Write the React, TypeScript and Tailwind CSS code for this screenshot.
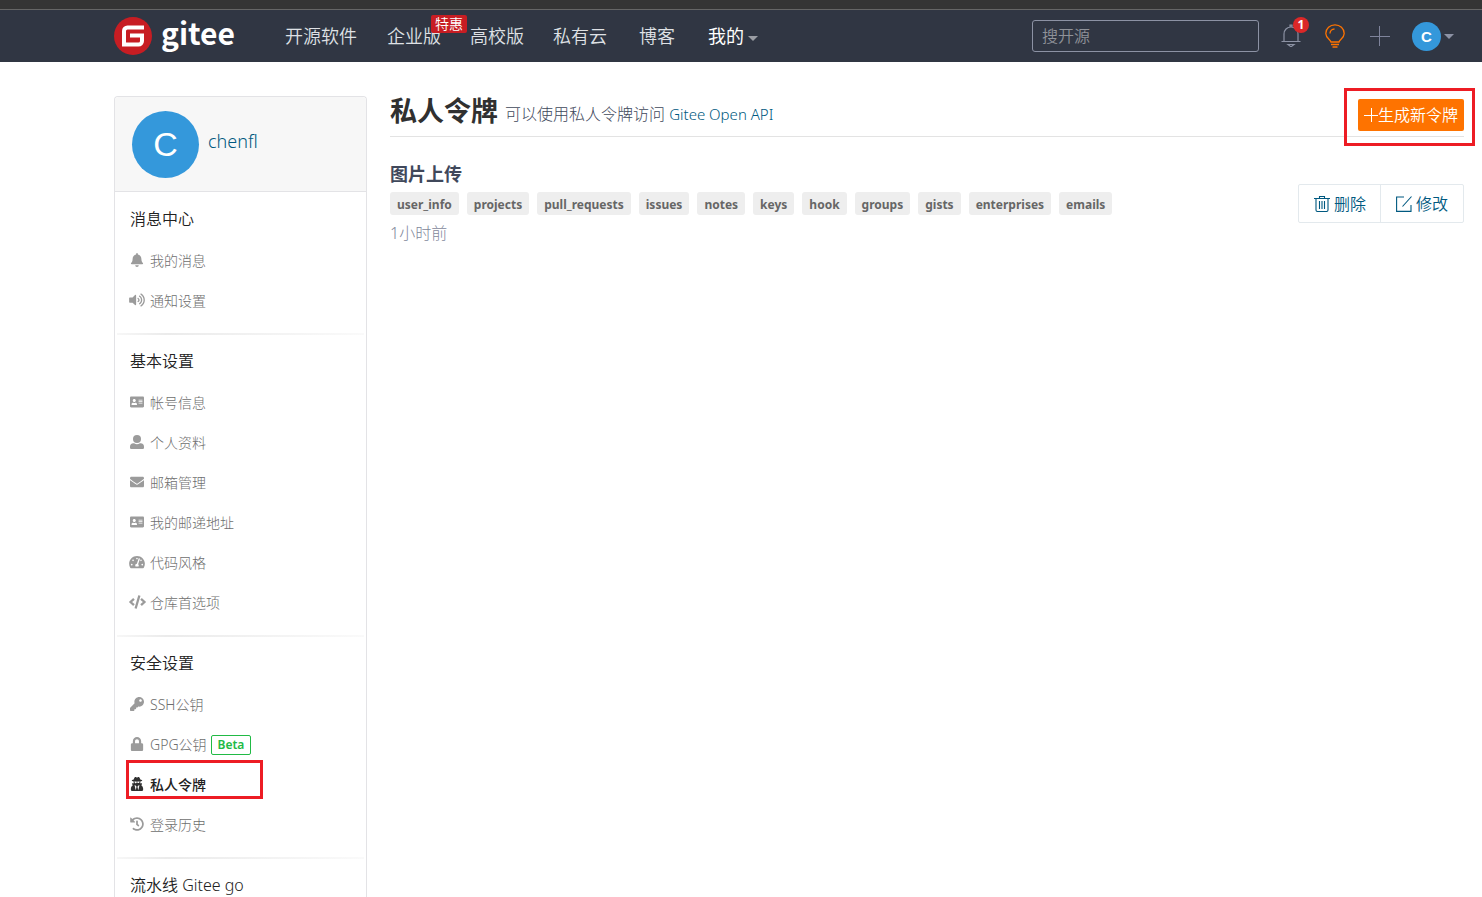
import type { ReactNode } from 'react';
import {
  FaAddressCard,
  FaBell,
  FaCode,
  FaEnvelope,
  FaHistory,
  FaKey,
  FaLock,
  FaTachometerAlt,
  FaUserSecret,
  FaVolumeUp,
} from 'react-icons/fa';

interface MenuItem {
  label: string;
  icon: ReactNode;
  beta?: boolean;
  active?: boolean;
}

interface MenuSection {
  title: string;
  items: MenuItem[];
}

function UserIcon() {
  return (
    <svg viewBox="0 0 14 14" className="size-3.5" fill="currentColor" aria-hidden="true">
      <circle cx="7" cy="4" r="4" />
      <path d="M3.500 8.300h.6a5 5 0 0 0 5.800 0h.6A3.500 3.500 0 0 1 14 11.800v1A1.200 1.200 0 0 1 12.800 14H1.200A1.200 1.200 0 0 1 0 12.800v-1a3.500 3.500 0 0 1 3.500-3.500z" />
    </svg>
  );
}

const sections: MenuSection[] = [
  {
    title: '消息中心',
    items: [
      { label: '我的消息', icon: <FaBell className="h-3.5" /> },
      { label: '通知设置', icon: <FaVolumeUp className="h-3.5 w-4 shrink-0" /> },
    ],
  },
  {
    title: '基本设置',
    items: [
      { label: '帐号信息', icon: <FaAddressCard className="h-3.5" /> },
      { label: '个人资料', icon: <UserIcon /> },
      { label: '邮箱管理', icon: <FaEnvelope className="h-3.5" /> },
      { label: '我的邮递地址', icon: <FaAddressCard className="h-3.5" /> },
      { label: '代码风格', icon: <FaTachometerAlt className="h-3.5 w-4 shrink-0" /> },
      { label: '仓库首选项', icon: <FaCode className="h-3.5 w-[17px] shrink-0" /> },
    ],
  },
  {
    title: '安全设置',
    items: [
      { label: 'SSH公钥', icon: <FaKey className="h-3.5" /> },
      { label: 'GPG公钥', icon: <FaLock className="h-3.5" />, beta: true },
      { label: '私人令牌', icon: <FaUserSecret className="h-3.5" />, active: true },
      { label: '登录历史', icon: <FaHistory className="h-3.5" /> },
    ],
  },
  { title: '流水线 Gitee go', items: [] },
];

const scopes = [
  'user_info',
  'projects',
  'pull_requests',
  'issues',
  'notes',
  'keys',
  'hook',
  'groups',
  'gists',
  'enterprises',
  'emails',
];

function Logo() {
  return (
    <a href="#" className="flex items-center gap-[9px] text-white">
      <svg viewBox="0 0 38 38" className="size-[38px]" aria-hidden="true">
        <circle cx="19" cy="19" r="19" fill="#c71d23" />
        <path
          d="M30 10.500H13.500a3.500 3.500 0 0 0-3.500 3.500V27.500h14.500a3.500 3.500 0 0 0 3.500-3.500V18.500H16"
          fill="none"
          stroke="#fff"
          strokeWidth="4"
        />
      </svg>
      <span className="mb-2 font-['Noto_Sans_CJK_SC',sans-serif] text-[30px] leading-[30px] font-bold">gitee</span>
    </a>
  );
}

function Caret({ className }: { className: string }) {
  return (
    <svg viewBox="0 0 10 5" className={`h-[5px] w-[10px] ${className}`} aria-hidden="true">
      <path d="M0 0h10L5 5z" fill="currentColor" />
    </svg>
  );
}

function NavLink({ children, className = '' }: { children: ReactNode; className?: string }) {
  return (
    <a href="#" className={`relative flex items-center whitespace-nowrap ${className}`}>
      {children}
    </a>
  );
}

function Header() {
  return (
    <header className="flex h-[52px] shrink-0 items-center bg-[#303643] pr-7 pl-[114px]">
      <Logo />
      <nav className="ml-[50px] flex text-lg leading-none font-[350] text-[#dfe1e5]">
        <NavLink className="mr-[30px]">开源软件</NavLink>
        <NavLink className="mr-[29px]">
          企业版
          <span className="absolute -top-3 left-11 z-10 flex h-[18px] items-center rounded-xs bg-[#c71d23] px-1 text-sm leading-none text-white">
            特惠
          </span>
        </NavLink>
        <NavLink className="mr-[29px]">高校版</NavLink>
        <NavLink className="mr-8">私有云</NavLink>
        <NavLink className="mr-[33px]">博客</NavLink>
        <NavLink className="gap-1 font-normal text-white">
          我的
          <Caret className="mt-1 text-[#9a9da4]" />
        </NavLink>
      </nav>
      <div className="ml-auto flex items-center">
        <input
          type="text"
          aria-label="搜开源"
          placeholder="搜开源"
          className="h-8 w-[227px] rounded-[3px] border border-[#8c92a4] bg-transparent px-[9px] text-base font-[350] text-white placeholder:text-[#8f9299]"
        />
        <button type="button" aria-label="通知" className="relative ml-[22px] text-[#8c92a4]">
          <svg viewBox="0 0 20 24" className="h-6 w-5" fill="none" stroke="currentColor" strokeWidth="1.2">
            <path d="M.5 17.500h19M3 17.500V10c0-4 3-7 7-7s7 3 7 7v7.500M9 3V1.200h2V3M7 20.500h6L10.500 22.500h-1z" />
          </svg>
          <span className="absolute -top-[7px] left-3 flex size-4 items-center justify-center rounded-full bg-[#db2828] text-xs leading-none font-bold text-white">
            1
          </span>
        </button>
        <button type="button" aria-label="提示" className="ml-6 text-[#fe7300]">
          <svg viewBox="0 0 20 24" className="h-6 w-5" fill="none" stroke="currentColor" strokeWidth="1.3">
            <path d="M6 18C5.500 15.500.8 14 .8 9.500.8 4.500 5 .8 10 .8s9.200 3.700 9.200 8.700c0 4.500-4.700 6-5.200 8.500zM6 20.500h8M7.500 23h5M5 9.500c0-2.500 2-4.500 4.500-4.500" />
          </svg>
        </button>
        <button type="button" aria-label="新建" className="ml-[25px] text-[#7f849c]">
          <svg viewBox="0 0 20 20" className="size-5" fill="none" stroke="currentColor" strokeWidth="1">
            <path d="M0 10.500h20M9.500 0v20" />
          </svg>
        </button>
        <button type="button" aria-label="chenfl" className="ml-[22px] flex items-center gap-[3px]">
          <span className="flex size-[29px] items-center justify-center rounded-full bg-[#3498db] font-['Liberation_Sans',sans-serif] text-[15px] leading-none font-bold text-white">
            C
          </span>
          <Caret className="w-[9px] text-[#8c92a4]" />
        </button>
      </div>
    </header>
  );
}

function MenuRow({ item }: { item: MenuItem }) {
  return (
    <li className="relative flex h-10 items-center">
      {item.active && (
        <span className="pointer-events-none absolute -top-[5px] -left-1 h-[39px] w-[137px] border-3 border-[#ed1c24]" />
      )}
      <a
        href="#"
        className={`flex items-center gap-1 text-sm leading-none ${item.active ? 'font-medium text-[#212121]' : 'font-light text-[#6e6e6e]'}`}
      >
        <span className={`mb-0.5 -ml-0.5 flex w-[18px] justify-center ${item.active ? 'text-[#303030]' : 'text-[#9b9b9b]'}`}>
          {item.icon}
        </span>
        {item.label}
        {item.beta && (
          <span className="flex h-5 items-center rounded-xs border border-[#21ba45] px-1.5 text-xs leading-none font-semibold text-[#21ba45]">
            Beta
          </span>
        )}
      </a>
    </li>
  );
}

function Sidebar() {
  return (
    <aside className="w-[253px] shrink-0 rounded-t border border-b-0 border-[#e3e3e6]">
      <div className="flex h-[95px] items-center gap-[9px] rounded-t border-b border-[#e3e3e6] bg-[#f7f7f7] pl-[17px]">
        <span className="flex size-[67px] items-center justify-center rounded-full bg-[#3498db] font-['Liberation_Sans',sans-serif] text-[34px] leading-none text-white">
          C
        </span>
        <a href="#" className="mb-1.5 text-lg leading-none font-[350] text-[#005980]">
          chenfl
        </a>
      </div>
      <div className="pt-px">
        {sections.map((section, index) => (
          <section key={section.title}>
            {index > 0 && (
              <div className="mx-0.5 h-0.5 bg-linear-to-r from-[#f7f7f7] via-[#ebebeb] via-20% to-[#fafafa]" />
            )}
            <div className="px-[15px] py-3">
              <h3 className="mb-2 flex h-7 items-center text-base leading-none font-[350] text-[#212121]">
                {section.title}
              </h3>
              <ul>
                {section.items.map((item) => (
                  <MenuRow key={item.label} item={item} />
                ))}
              </ul>
            </div>
          </section>
        ))}
      </div>
    </aside>
  );
}

function TokenActions() {
  return (
    <div className="flex h-[39px] shrink-0 rounded-xs border border-[#e3e9ed] text-base leading-none font-[350] text-[#005980]">
      <button type="button" className="flex items-center gap-1 border-r border-[#e3e9ed] pr-3.5 pl-[15px]">
        <svg viewBox="0 0 16 16" className="size-4" fill="none" stroke="currentColor" strokeWidth="1.1">
          <path d="M0 2.500h16M5.500 2.500v-2h5v2M2 2.500v11.500q0 1.500 1.500 1.500h9q1.500 0 1.500-1.500V2.500M5.500 5v8M8 5v8M10.500 5v8" />
        </svg>
        删除
      </button>
      <button type="button" className="flex items-center gap-1 pr-[15px] pl-[15px]">
        <svg viewBox="0 0 16 16" className="size-4" fill="none" stroke="currentColor" strokeWidth="1.1">
          <path d="M8 1H.600v14.400h14.400V9M6.500 10.500L15.500.500" />
        </svg>
        修改
      </button>
    </div>
  );
}

function TokenPage() {
  return (
    <main className="min-w-0 flex-1">
      <div className="flex h-[41px] justify-between border-b border-[#e3e3e3]">
        <div className="flex h-[30px] items-center gap-[7px] whitespace-nowrap">
          <h1 className="text-[27px] leading-[30px] font-bold text-[#303030]">私人令牌</h1>
          <p className="pt-1.5 text-base leading-none font-light text-[#40485b]">
            可以使用私人令牌访问{' '}
            <a href="#" className="text-[15px] font-[350] text-[#005980]">
              Gitee Open API
            </a>
          </p>
        </div>
        <div className="relative mt-[3px] h-8">
          <button
            type="button"
            className="flex h-8 items-center rounded-xs bg-[#fe7300] px-1.5 text-base leading-none font-[350] whitespace-nowrap text-white"
          >
            <svg viewBox="0 0 14 14" className="size-3.5" fill="none" stroke="currentColor" strokeWidth="1">
              <path d="M0 7.500h14M7.500 0v14" />
            </svg>
            生成新令牌
          </button>
          <span className="pointer-events-none absolute -top-[11px] -right-[11px] h-[58px] w-[131px] border-3 border-[#ed1c24]" />
        </div>
      </div>
      <div className="mt-[26px] flex items-start justify-between">
        <div>
          <h2 className="text-lg leading-[22px] font-bold text-[#40485b]">图片上传</h2>
          <div className="mt-[7px] flex flex-wrap gap-2">
            {scopes.map((scope) => (
              <span
                key={scope}
                className="flex h-[23px] items-center rounded-[3px] bg-[#eee] px-[7px] pt-0.5 text-xs leading-none font-bold text-[#666]"
              >
                {scope}
              </span>
            ))}
          </div>
          <p className="mt-[10px] text-base leading-4 font-light text-[#7f889b]">1小时前</p>
        </div>
        <div className="mt-[21px]">
          <TokenActions />
        </div>
      </div>
    </main>
  );
}

export default function App() {
  return (
    <div className="flex h-screen flex-col overflow-hidden bg-white font-['Noto_Sans','Noto_Sans_CJK_SC',sans-serif]">
      <div className="h-2.5 shrink-0 border-b border-[#666] bg-[#353535]" />
      <Header />
      <div className="flex min-h-0 flex-1 gap-[23px] pt-[34px] pr-[18px] pl-[114px]">
        <Sidebar />
        <TokenPage />
      </div>
    </div>
  );
}
